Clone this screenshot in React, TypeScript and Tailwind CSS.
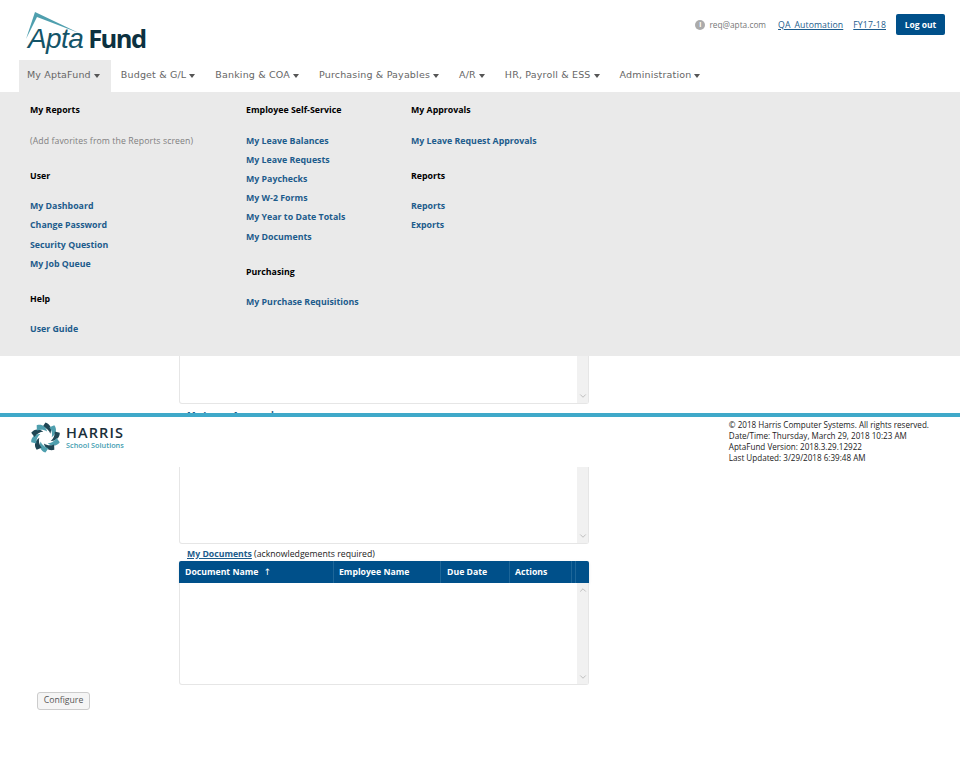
import { ChevronDown, ChevronUp } from 'lucide-react';

const navItems = ['My AptaFund', 'Budget & G/L', 'Banking & COA', 'Purchasing & Payables', 'A/R', 'HR, Payroll & ESS', 'Administration'];

function MenuGroup({ title, links, note }: { title: string; links?: string[]; note?: string }) {
    return (
        <div className="mb-[23px]">
            <h3 className="mb-[18.6px] h-[12px] text-[8.8px] leading-[12px] font-bold text-black">{title}</h3>
            {note && <p className="h-[12px] text-[8.7px] leading-[12px] tracking-[0.1px] text-[#808080]">{note}</p>}
            {links && (
                <ul className="flex flex-col gap-[7.2px]">
                    {links.map((link) => (
                        <li key={link} className="h-[12px] text-[8.8px] leading-[12px] font-bold text-[#1d5c8c]">
                            {link}
                        </li>
                    ))}
                </ul>
            )}
        </div>
    );
}

function ScrollPanel({ height, top = false }: { height: number; top?: boolean }) {
    return (
        <div
            className="flex justify-end rounded-b-[3px] border border-t-0 border-[#e6e6e6] bg-white"
            style={{ height }}
        >
            <div className="flex w-[11px] flex-col items-center justify-between bg-[#f1f1f1] py-[2px] text-[#b4b4b4]">
                {top ? <ChevronUp size={10} /> : <span />}
                <ChevronDown size={10} />
            </div>
        </div>
    );
}

export default function App() {
    return (
        <div className="relative h-[767px] w-[960px] overflow-hidden bg-white font-['Open_Sans',sans-serif]">
            {/* Header */}
            <header className="flex h-[60px] items-start justify-between pr-[15px] pl-[24px]">
                <div className="relative h-[60px] w-[125px]">
                    <svg className="absolute top-[11px] left-0" width="60" height="30" viewBox="0 0 60 30">
                        <path d="M11 1 L55 22 L13 6 L2 28 Z" fill="#4f9fae" />
                    </svg>
                    <div className="absolute top-[21px] left-[4px] flex items-baseline leading-[34px]">
                        <span className="font-['Liberation_Sans',sans-serif] text-[28px] tracking-[-0.6px] text-[#145468] italic">Apta</span>
                        <span className="ml-[5px] text-[25.5px] font-bold tracking-[-1.6px] text-[#0c3140]">Fund</span>
                    </div>
                </div>
                <div className="mt-[14px] flex items-center text-[8.7px] leading-[20px]">
                    <span className="mr-[4px] flex h-[10px] w-[10px] items-center justify-center rounded-full bg-[#ababab] text-[7px] leading-none font-bold text-white">i</span>
                    <span className="mr-[12px] text-[8.3px] text-[#777]">req@apta.com</span>
                    <a className="mr-[10px] tracking-[0.1px] text-[#1d5c8c] underline">QA_Automation</a>
                    <a className="mr-[10px] tracking-[0.1px] text-[#1d5c8c] underline">FY17-18</a>
                    <button className="h-[21px] w-[49px] rounded-[2px] bg-[#00508a] text-[8.5px] font-bold text-white">Log out</button>
                </div>
            </header>

            {/* Navigation */}
            <nav className="relative z-20 flex h-[32px] pl-[19px] font-['DejaVu_Sans',sans-serif]">
                {navItems.map((item, i) => (
                    <div
                        key={item}
                        className={
                            i === 0
                                ? 'flex items-center bg-[#eaeaea] pr-[11px] pb-[1px] pl-[8px] text-[9.5px] tracking-[0.17px] text-[#666]'
                                : 'flex items-center px-[10px] pb-[1px] text-[9.5px] tracking-[0.17px] text-[#666]'
                        }
                    >
                        {item}
                        <span className="mt-[1px] ml-[3px] h-0 w-0 border-x-[3px] border-t-[4px] border-x-transparent border-t-[#555]" />
                    </div>
                ))}
                {/* Open dropdown */}
                <div className="absolute top-[32px] left-0 h-[264px] w-[960px] bg-[#eaeaea] pt-[12px] pl-[30px] font-['Open_Sans',sans-serif]">
                    <div className="flex">
                        <div className="w-[216px]">
                            <MenuGroup title="My Reports" note="(Add favorites from the Reports screen)" />
                            <MenuGroup title="User" links={['My Dashboard', 'Change Password', 'Security Question', 'My Job Queue']} />
                            <MenuGroup title="Help" links={['User Guide']} />
                        </div>
                        <div className="w-[165px]">
                            <MenuGroup title="Employee Self-Service" links={['My Leave Balances', 'My Leave Requests', 'My Paychecks', 'My W-2 Forms', 'My Year to Date Totals', 'My Documents']} />
                            <MenuGroup title="Purchasing" links={['My Purchase Requisitions']} />
                        </div>
                        <div>
                            <MenuGroup title="My Approvals" links={['My Leave Request Approvals']} />
                            <MenuGroup title="Reports" links={['Reports', 'Exports']} />
                        </div>
                    </div>
                </div>
            </nav>

            {/* Dashboard content behind the menu */}
            <main className="ml-[179px] w-[410px]">
                <ScrollPanel height={312} />
                <h2 className="mt-[5px] h-[12px] pl-[8px] text-[9.2px] leading-[12px] font-bold text-[#1d5c8c] underline">My Leave Approvals</h2>
                <ScrollPanel height={123} />
                <p className="mt-[4px] h-[12px] pl-[8px] text-[8.7px] leading-[12px] text-[#222]">
                    <a className="font-bold text-[#1d5c8c] underline">My Documents</a> (acknowledgements required)
                </p>
                <div className="mt-[1px] flex h-[22px] rounded-t-[2px] bg-[#00508a] text-[8.7px] leading-[22px] font-bold text-white shadow-sm">
                    <div className="w-[155px] border-r border-[#1d6699] pl-[6px]">
                        Document Name <span className="ml-[3px] font-['DejaVu_Sans',sans-serif] text-[9px] font-normal">↑</span>
                    </div>
                    <div className="w-[107px] border-r border-[#1d6699] pl-[5px]">Employee Name</div>
                    <div className="w-[69px] border-r border-[#1d6699] pl-[6px]">Due Date</div>
                    <div className="w-[62px] border-r border-[#1d6699] pl-[5px]">Actions</div>
                    <div className="w-[4px] border-r border-[#1d6699]" />
                </div>
                <ScrollPanel height={102} top />
            </main>
            <button className="mt-[7px] ml-[37px] block h-[18px] w-[53px] rounded-[3px] border border-[#ccc] bg-[#f5f5f5] text-[8.7px] text-[#555]">
                Configure
            </button>

            {/* Footer */}
            <footer className="absolute top-[413px] left-0 flex h-[54px] w-[960px] justify-between border-t-[4px] border-[#3fa9c9] bg-white pr-[31px] pl-[30px]">
                <div className="mt-[5px] flex items-start">
                    <svg width="31" height="31" viewBox="-16 -16 32 32">
                        {[0, 36, 72, 108, 144, 180, 216, 252, 288, 324].map((a, i) => (
                            <path
                                key={a}
                                d="M0 -15.5 C5 -14 7 -9 5 -4 C4 -7 1 -10 -3 -11 Z"
                                fill={i % 2 === 0 ? '#1f4654' : '#4f9fae'}
                                transform={`rotate(${a})`}
                            />
                        ))}
                    </svg>
                    <div className="mt-[4px] ml-[5px]">
                        <div className="h-[14px] text-[14.5px] leading-[14px] font-semibold tracking-[1.1px] text-[#1a2f3a]">HARRIS</div>
                        <div className="mt-[1px] text-[7.3px] leading-[9px] font-semibold text-[#3f9db0]">School Solutions</div>
                    </div>
                </div>
                <div className="mt-[3px] text-[8.1px] leading-[10.9px] text-[#222]">
                    <div>© 2018 Harris Computer Systems. All rights reserved.</div>
                    <div>Date/Time: Thursday, March 29, 2018 10:23 AM</div>
                    <div>AptaFund Version: 2018.3.29.12922</div>
                    <div>Last Updated: 3/29/2018 6:39:48 AM</div>
                </div>
            </footer>
        </div>
    );
}
